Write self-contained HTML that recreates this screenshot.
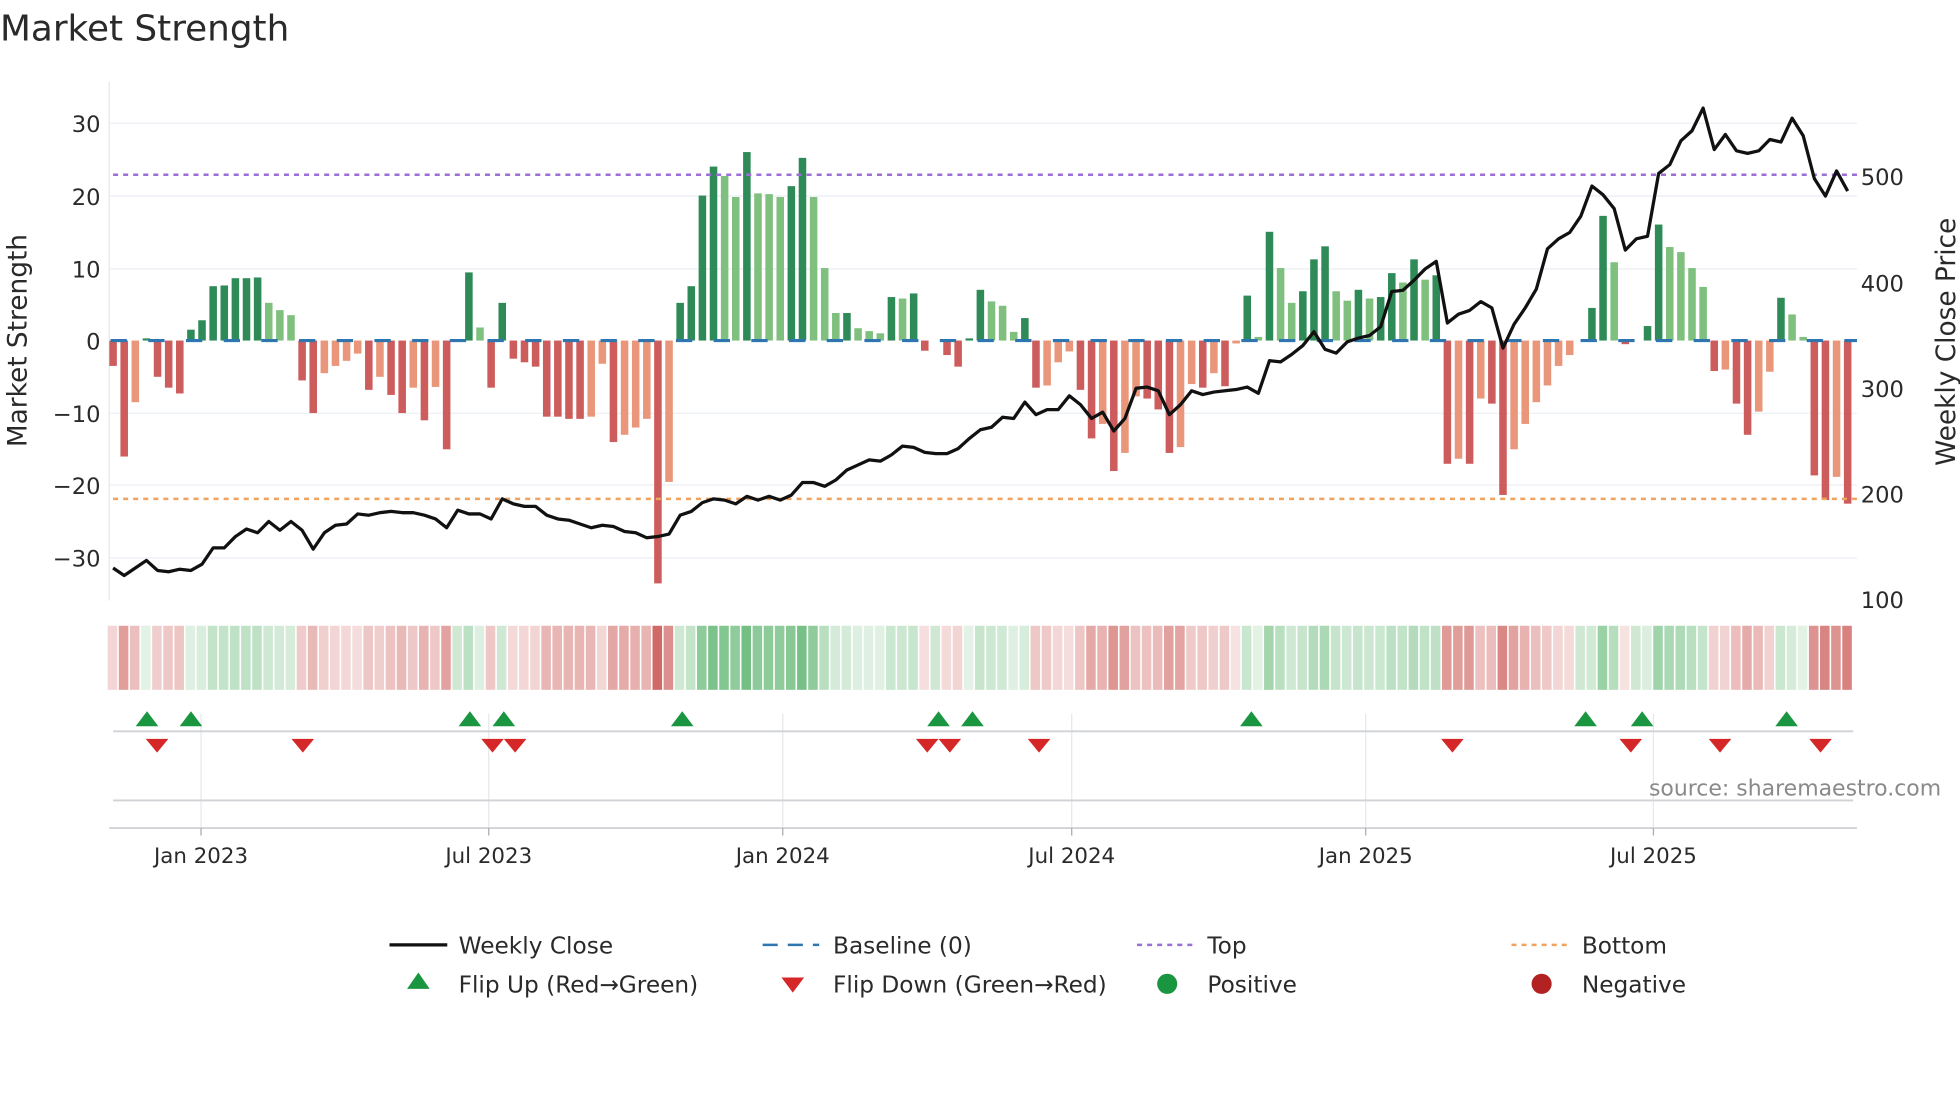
<!DOCTYPE html>
<html><head><meta charset="utf-8"><style>
html,body{margin:0;padding:0;background:#fff;width:1960px;height:1102px;overflow:hidden}
svg{display:block}
text{font-family:"DejaVu Sans","Liberation Sans",sans-serif;fill:#2a2a2a}
</style></head><body>
<svg id="s" width="1960" height="1102" viewBox="0 0 1560 877" xmlns="http://www.w3.org/2000/svg">
<g id="grid" stroke="#eef1f6" stroke-width="1.2">
<line x1="88" x2="1478" y1="98" y2="98"/><line x1="88" x2="1478" y1="156" y2="156"/><line x1="88" x2="1478" y1="214" y2="214"/><line x1="88" x2="1478" y1="329" y2="329"/><line x1="88" x2="1478" y1="386" y2="386"/><line x1="88" x2="1478" y1="444" y2="444"/>
</g>
<line x1="87" x2="87" y1="65" y2="478" stroke="#e8ebf0" stroke-width="1.2"/>
<g id="bars"></g>
<line x1="88" x2="1478" y1="271" y2="271" stroke="#2f75b0" stroke-width="2.5" stroke-dasharray="13,17"/>
<line x1="90" x2="1478" y1="139" y2="139" stroke="#9b6fd6" stroke-width="2" stroke-dasharray="4,4"/>
<line x1="90" x2="1478" y1="397" y2="397" stroke="#f0a35e" stroke-width="2" stroke-dasharray="4,4"/>
<polyline id="price" fill="none" stroke="#111" stroke-width="2.6" stroke-linejoin="round"/>
<g id="strip"></g>
<g stroke="#e6e8ec" stroke-width="1"><line x1="160" x2="160" y1="568" y2="659"/><line x1="389" x2="389" y1="568" y2="659"/><line x1="623" x2="623" y1="568" y2="659"/><line x1="853" x2="853" y1="568" y2="659"/><line x1="1087" x2="1087" y1="568" y2="659"/><line x1="1316" x2="1316" y1="568" y2="659"/></g>
<line x1="90" x2="1475" y1="582" y2="582" stroke="#d0d2d6" stroke-width="1.5"/>
<line x1="90" x2="1475" y1="637" y2="637" stroke="#d0d2d6" stroke-width="1.5"/>
<line x1="87" x2="1478" y1="659" y2="659" stroke="#d0d2d6" stroke-width="1.5"/>
<g stroke="#aaa" stroke-width="1"><line x1="160" x2="160" y1="659" y2="665"/><line x1="389" x2="389" y1="659" y2="665"/><line x1="623" x2="623" y1="659" y2="665"/><line x1="853" x2="853" y1="659" y2="665"/><line x1="1087" x2="1087" y1="659" y2="665"/><line x1="1316" x2="1316" y1="659" y2="665"/></g>
<g id="tri"></g>
<text x="0" y="32" font-size="28.5">Market Strength</text>
<g font-size="18" text-anchor="end"><text x="80" y="105">30</text><text x="80" y="163">20</text><text x="80" y="221">10</text><text x="80" y="278">0</text><text x="80" y="336">−10</text><text x="80" y="393">−20</text><text x="80" y="451">−30</text></g>
<g font-size="18"><text x="1481" y="147">500</text><text x="1481" y="232">400</text><text x="1481" y="316">300</text><text x="1481" y="400">200</text><text x="1481" y="484">100</text></g>
<text transform="translate(21,271) rotate(-90)" font-size="21" text-anchor="middle">Market Strength</text>
<text transform="translate(1556,272) rotate(-90)" font-size="21" text-anchor="middle">Weekly Close Price</text>
<g font-size="17" text-anchor="middle"><text x="160" y="687">Jan 2023</text><text x="389" y="687">Jul 2023</text><text x="623" y="687">Jan 2024</text><text x="853" y="687">Jul 2024</text><text x="1087" y="687">Jan 2025</text><text x="1316" y="687">Jul 2025</text></g>
<text x="1545" y="633" font-size="17.5" text-anchor="end" style="fill:#8a8a8a">source: sharemaestro.com</text>
<g font-size="18.5">
<line x1="310" x2="356" y1="752" y2="752" stroke="#111" stroke-width="2.6"/><text x="365" y="759">Weekly Close</text>
<line x1="607" x2="652" y1="752" y2="752" stroke="#2f75b0" stroke-width="2" stroke-dasharray="12,8"/><text x="663" y="759">Baseline (0)</text>
<line x1="905" x2="950" y1="752" y2="752" stroke="#9b6fd6" stroke-width="2" stroke-dasharray="4,4"/><text x="961" y="759">Top</text>
<line x1="1203" x2="1248" y1="752" y2="752" stroke="#f0a35e" stroke-width="2" stroke-dasharray="4,4"/><text x="1259" y="759">Bottom</text>
<polygon points="333,774 324,787 342,787" fill="#1a9641"/><text x="365" y="790">Flip Up (Red→Green)</text>
<polygon points="631,790 622,778 640,778" fill="#d62728"/><text x="663" y="790">Flip Down (Green→Red)</text>
<circle cx="929" cy="783" r="8" fill="#1a9641"/><text x="961" y="790">Positive</text>
<circle cx="1227" cy="783" r="8" fill="#b22222"/><text x="1259" y="790">Negative</text>
</g>
</svg>
<script>
var V=[-3.5,-16,-8.5,0.3,-5,-6.5,-7.3,1.5,2.8,7.5,7.6,8.6,8.6,8.7,5.2,4.2,3.5,-5.5,-10,-4.5,-3.5,-2.8,-1.8,-6.8,-5,-7.5,-10,-6.5,-11,-6.4,-15,0,9.4,1.8,-6.5,5.2,-2.5,-3,-3.6,-10.5,-10.5,-10.8,-10.8,-10.5,-3.2,-14,-13,-12,-10.8,-33.5,-19.5,5.2,7.5,20,24,22.7,19.8,26,20.3,20.2,19.8,21.3,25.2,19.8,10,3.8,3.8,1.7,1.3,1,6,5.8,6.5,-1.4,0,-2,-3.6,0.3,7,5.4,4.8,1.2,3.1,-6.5,-6.2,-3,-1.5,-6.8,-13.5,-11.5,-18,-15.5,-7.7,-8,-9.5,-15.5,-14.7,-6,-6.5,-4.5,-6.3,-0.4,6.2,0.5,15,10,5.2,6.8,11.2,13,6.8,5.5,7,5.8,6,9.3,8,11.2,8.4,9,-17,-16.3,-17,-8,-8.7,-21.3,-15,-11.5,-8.5,-6.2,-3.5,-2,0,4.5,17.2,10.8,-0.5,0,2,16,12.9,12.2,10,7.4,-4.2,-4,-8.7,-13,-9.8,-4.3,5.9,3.6,0.5,-18.6,-22,-18.8,-22.5];
var P=[452,458,452,446,454,455,453,454,449,436,436,427,421,424,415,422,415,422,437,424,418,417,409,410,408,407,408,408,410,413,420,406,409,409,413,397,401,403,403,410,413,414,417,420,418,419,423,424,428,427,425,410,407,400,397,398,401,395,398,395,398,394,384,384,387,382,374,370,366,367,362,355,356,360,361,361,357,349,342,340,332,333,320,330,326,326,315,322,333,328,343,333,309,308,311,330,322,311,314,312,311,310,308,313,287,288,282,275,264,278,281,272,269,267,260,232,231,223,214,208,257,250,247,240,245,277,258,245,230,198,190,185,172,148,155,166,199,190,188,138,131,112,104,86,119,107,120,122,120,111,113,94,108,142,156,136,152];
var NS="http://www.w3.org/2000/svg";
function el(p,t,a){var e=document.createElementNS(NS,t);for(var k in a)e.setAttribute(k,a[k]);document.getElementById(p).appendChild(e);}
var pts=[];
for(var i=0;i<V.length;i++){
 var x=90+i*8.85,v=V[i],pv=i?V[i-1]:0,c;
 if(v>0)c=(v>=pv)?"#2e8b57":"#7fc07f"; else c=(v<=pv)?"#cd5c5c":"#e9967a";
 if(v!==0){var h=Math.abs(v)*5.77;el("bars","rect",{x:x-3,y:v>0?271-h:271,width:6,height:h,fill:c});}
 var a=Math.min(1,0.18+Math.abs(v)/28*0.82);
 var sc=v>0?"rgba(70,170,90,"+(a*0.8)+")":"rgba(200,80,75,"+(a*0.85)+")";
 if(v===0)sc="rgba(120,190,130,0.35)";
 el("strip","rect",{x:x-4.3,y:498,width:7.6,height:51,fill:sc});
 pts.push(x+","+P[i]);
}
document.getElementById("price").setAttribute("points",pts.join(" "));
[117,152,374,401,543,747,774,996,1262,1307,1422].forEach(function(x){el("tri","polygon",{points:x+",566 "+(x-9)+",578 "+(x+9)+",578",fill:"#1a9641"});});
[125,241,392,410,738,756,827,1156,1298,1369,1449].forEach(function(x){el("tri","polygon",{points:x+",599 "+(x-9)+",588 "+(x+9)+",588",fill:"#d62728"});});
</script>
</body></html>
